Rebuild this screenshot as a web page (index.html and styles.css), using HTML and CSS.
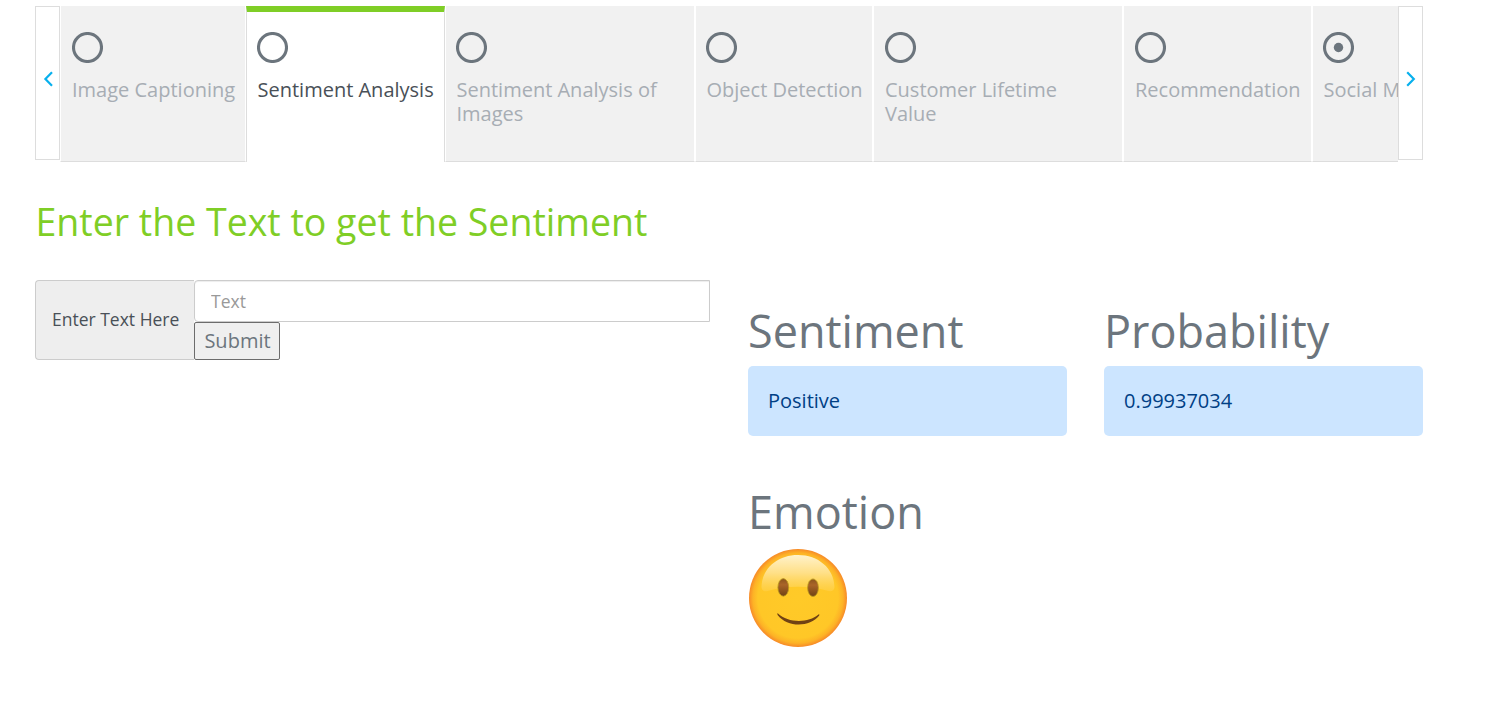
FILE: index.html
```html
<!DOCTYPE html>
<html lang="en">
<head>
<meta charset="utf-8">
<title>Sentiment Analysis</title>
<link rel="stylesheet" href="styles.css">
</head>
<body>
<main class="page">
  <nav class="tabs">
    <button class="arrow arrow-left" aria-label="Previous"><svg width="10" height="16" viewBox="0 0 10 16"><path d="M9 1.200 2.400 8l6.600 6.800"/></svg></button>
    <div class="tab-list">
      <div class="tab tab-1"><svg class="radio" viewBox="0 0 31 31"><circle class="ring" cx="15.500" cy="15.500" r="14"/></svg><span>Image Captioning</span></div>
      <div class="tab tab-2 active"><svg class="radio" viewBox="0 0 31 31"><circle class="ring" cx="15.500" cy="15.500" r="14"/></svg><span>Sentiment Analysis</span></div>
      <div class="tab tab-3"><svg class="radio" viewBox="0 0 31 31"><circle class="ring" cx="15.500" cy="15.500" r="14"/></svg><span>Sentiment Analysis of Images</span></div>
      <div class="tab tab-4"><svg class="radio" viewBox="0 0 31 31"><circle class="ring" cx="15.500" cy="15.500" r="14"/></svg><span>Object Detection</span></div>
      <div class="tab tab-5"><svg class="radio" viewBox="0 0 31 31"><circle class="ring" cx="15.500" cy="15.500" r="14"/></svg><span>Customer Lifetime Value</span></div>
      <div class="tab tab-6"><svg class="radio" viewBox="0 0 31 31"><circle class="ring" cx="15.500" cy="15.500" r="14"/></svg><span>Recommendation</span></div>
      <div class="tab tab-7"><svg class="radio" viewBox="0 0 31 31"><circle class="ring" cx="15.500" cy="15.500" r="14"/><circle class="dot" cx="15.500" cy="15.500" r="4.700"/></svg><span>Social M</span></div>
    </div>
    <button class="arrow arrow-right" aria-label="Next"><svg width="10" height="16" viewBox="0 0 10 16"><path d="M1.200 1.200 7.800 8l-6.600 6.800"/></svg></button>
  </nav>
  <h1 class="title">Enter the Text to get the Sentiment</h1>
  <section class="content">
    <form class="entry">
      <label class="addon" for="text">Enter Text Here</label>
      <div class="controls">
        <input class="field" id="text" type="text" placeholder="Text">
        <button class="submit" type="button">Submit</button>
      </div>
    </form>
    <div class="results">
      <div class="result"><h2 class="heading">Sentiment</h2><div class="alert">Positive</div></div>
      <div class="result"><h2 class="heading">Probability</h2><div class="alert">0.99937034</div></div>
      <div class="result emotion">
        <h2 class="heading">Emotion</h2>
        <svg class="face" width="100" height="100" viewBox="0 0 100 100">
          <defs>
            <radialGradient id="skin"><stop offset="0" stop-color="#ffca28"/><stop offset=".82" stop-color="#ffc727"/><stop offset=".92" stop-color="#fdb226"/><stop offset="1" stop-color="#f78a28"/></radialGradient>
            <linearGradient id="shine" x1="0" y1="0" x2="0" y2="1"><stop offset="0" stop-color="#fff2cc"/><stop offset=".5" stop-color="#ffe18c" stop-opacity=".95"/><stop offset="1" stop-color="#ffd65c" stop-opacity=".4"/></linearGradient>
            <linearGradient id="eye" x1="0" y1="0" x2="0" y2="1"><stop offset="0" stop-color="#8a541d"/><stop offset=".35" stop-color="#aa6428"/><stop offset="1" stop-color="#704214"/></linearGradient>
          </defs>
          <circle cx="50" cy="50" r="49" fill="url(#skin)"/>
          <path d="M13.500 39C14 20 30 7 50 7s36 13 36.500 32c0 4-4 5-8 3.500C60 37.500 40 37.500 21.500 42.500c-4 1.500-8 .5-8-3.500Z" fill="url(#shine)"/>
          <ellipse cx="35.300" cy="39.400" rx="5.400" ry="8.800" fill="url(#eye)" stroke="#bd9a1e" stroke-width=".8"/>
          <ellipse cx="65" cy="39.700" rx="5.400" ry="8.800" fill="url(#eye)" stroke="#bd9a1e" stroke-width=".8"/>
          <path d="M30 65.500c10 9.500 30 10 40.500 1 .8-.9 1.200 0 .5 1.300-9 11.500-31.500 12-41.200-.6-.7-1-.7-2.300.2-1.700Z" fill="#704214"/>
        </svg>
      </div>
    </div>
  </section>
</main>
</body>
</html>
```

FILE: styles.css
```css
* { box-sizing: border-box; }
body { margin: 0; background: #fff; color: #6c757d; font-family: "Open Sans", sans-serif; font-size: 20px; }
button, input { font-family: inherit; }
.page { width: 1423px; padding: 6px 0 0 35px; }
.tabs { display: flex; height: 156px; }
.arrow { display: flex; align-items: center; justify-content: center; width: 25px; height: 154px; padding: 0; border: 1px solid #ddd; background: #fff; flex: none; }
.arrow svg { margin-top: -9px; fill: none; stroke: #08b0ed; stroke-width: 2.2; }
.tab-list { display: flex; width: 1338px; overflow: hidden; }
.tab { display: flex; flex-direction: column; flex: none; height: 156px; padding: 26px 8px 0 10.5px; border-left: 1px solid #fff; border-right: 1px solid #fff; border-bottom: 1px solid #ddd; background: #f1f1f1; color: #a7adb4; line-height: 24px; }
.tab-1 { width: 186px; }
.tab-2 { width: 199px; }
.tab-3 { width: 250px; }
.tab-4 { width: 178px; }
.tab-5 { width: 250px; padding-right: 30px; }
.tab-6 { width: 189px; }
.tab-7 { width: 250px; }
.tab.active { padding: 20px 0 0 10.5px; border-top: 6px solid #7fce26; border-left-color: #ddd; border-right-color: #ddd; border-bottom: 0; background: #fff; color: #495057; }
.radio { width: 31px; height: 31px; margin: 0 0 15px -0.5px; }
.tab-1, .tab-5, .tab-6 { padding-left: 11px; }
.tab-1 .radio, .tab-5 .radio, .tab-6 .radio { margin-left: 0; }
.ring { fill: none; stroke: #6c757d; stroke-width: 3.1; }
.dot { fill: #6c757d; }
.title { margin: 32px 0 0 0.5px; color: #7fce26; font-size: 37.5px; font-weight: 400; line-height: 56px; }
.content { display: flex; margin-top: 30px; }
.entry { display: flex; width: 675px; height: 80px; }
.addon { display: flex; align-items: center; width: 159px; padding: 0 0 2px 16px; border: 1px solid #ccc; border-right: 0; border-radius: 4px 0 0 4px; background: #eee; color: #495057; font-size: 17.5px; white-space: nowrap; }
.controls { display: flex; flex-direction: column; align-items: flex-start; width: 516px; }
.field { width: 516px; height: 42px; padding: 0 16px; border: 1px solid #ccc; border-radius: 4px 0 0 4px; box-shadow: inset 0 1px 1px rgba(0,0,0,.075); font-size: 17.5px; }
.field::placeholder { color: #999; }
.submit { width: 86px; height: 38px; padding: 0 0 2px 1px; border: 1px solid #6c6c6c; border-radius: 2px; background: #efefef; color: #6c757d; font-size: 20px; }
.results { display: grid; grid-template-columns: 319px 319px; column-gap: 37px; margin: 24px 0 0 38px; align-content: start; }
.heading { margin: 0; height: 62px; font-size: 45px; font-weight: 400; line-height: 54px; }
.alert { height: 70px; padding: 20px; border-radius: 5px; background: #cce5ff; color: #004085; line-height: 30px; }
.emotion { margin-top: 49px; }
.emotion .heading { height: 63px; }
.face { display: block; }
```
